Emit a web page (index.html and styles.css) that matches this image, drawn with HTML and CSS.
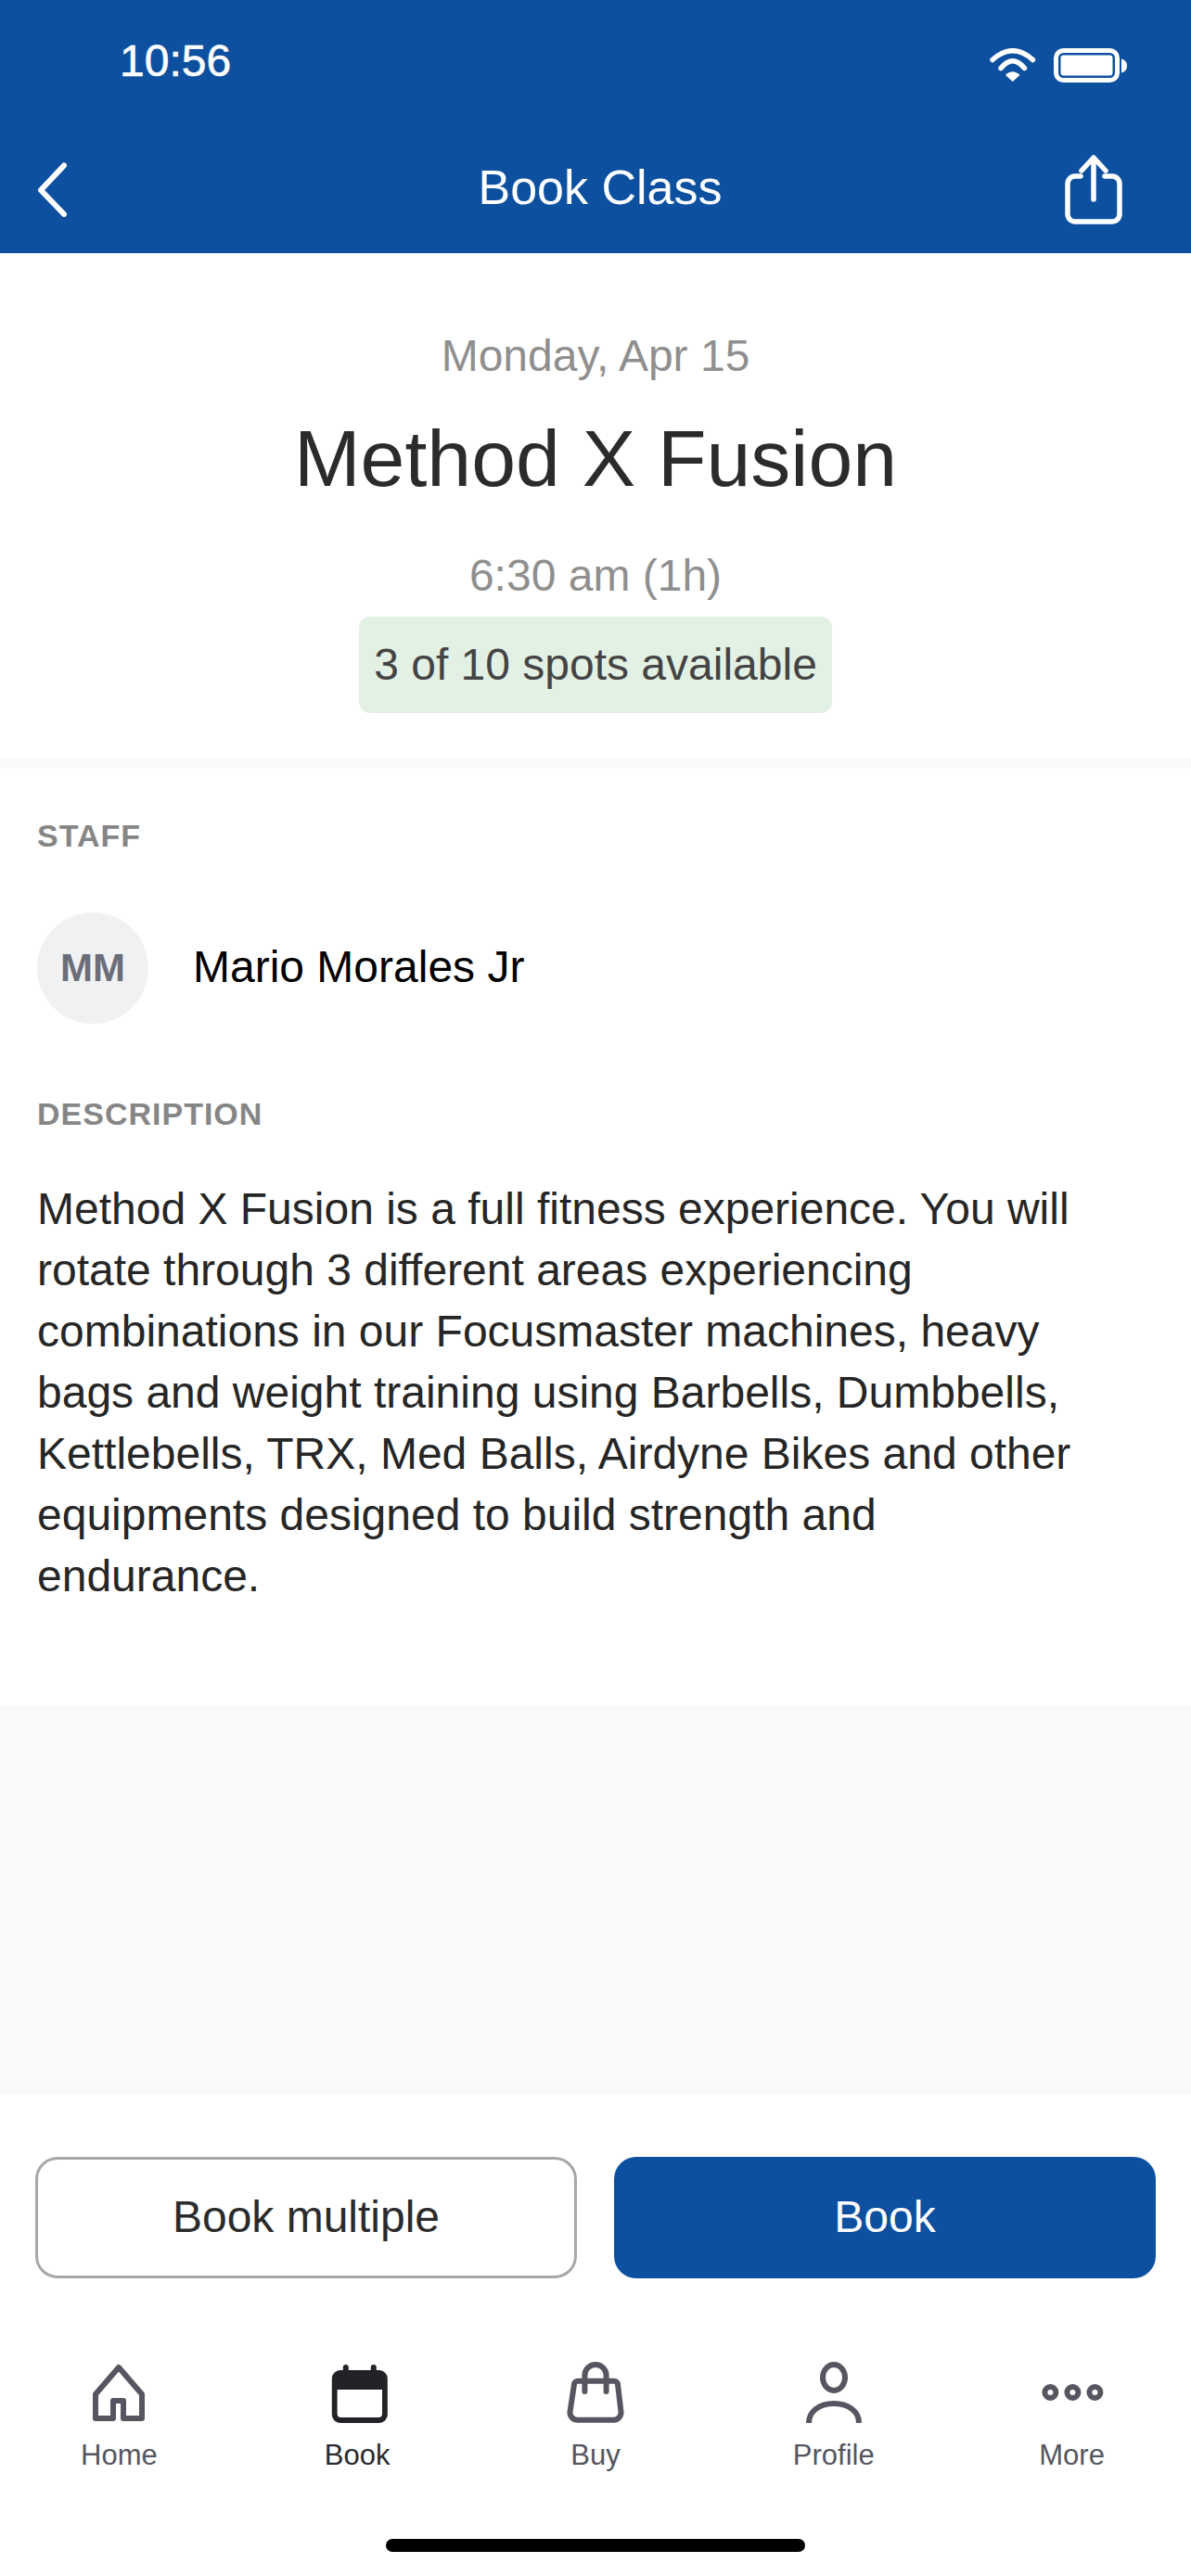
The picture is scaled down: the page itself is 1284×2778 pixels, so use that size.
FILE: index.html
```html
<!DOCTYPE html>
<html lang="en">
<head>
<meta charset="utf-8">
<title>Book Class</title>
<link rel="stylesheet" href="styles.css">
</head>
<body>
<div class="app">
  <header class="header">
    <div class="status">
      <span class="clock">10:56</span>
      <div class="status-icons">
        <svg class="wifi" viewBox="0 0 50 36" width="50" height="36"><path class="w-arc" d="M3 12.5Q24.7 -7 46.5 12.5"/><path class="w-arc" d="M12 21.5Q24.7 6 37.5 21.5"/><path class="w-fill" d="M17 29Q24.7 21.5 32.5 29L24.7 36Z"/></svg>
        <svg class="battery" viewBox="0 0 80 38" width="80" height="38"><rect class="b-out" x="2.5" y="2.5" width="66" height="32" rx="8"/><rect class="b-in" x="7.5" y="7.5" width="56" height="22" rx="3"/><path class="b-in" d="M73 11.5C77 12.5 79 15.5 79 19S77 25.5 73 26.5Z"/></svg>
      </div>
    </div>
    <nav class="nav">
      <svg class="back" viewBox="0 0 40 60" width="40" height="60"><path d="M32 5.5L7 32L32 58" transform="translate(0 -1)"/></svg>
      <h1 class="nav-title">Book Class</h1>
      <svg class="share" viewBox="0 0 66 76" width="66" height="76"><path d="M20 24H14a8 8 0 0 0-8 8V65a8 8 0 0 0 8 8H54a8 8 0 0 0 8-8V32a8 8 0 0 0-8-8H46"/><path d="M34 4V49M21 18L34 4L47 18"/></svg>
    </nav>
  </header>

  <section class="hero">
    <p class="date">Monday, Apr 15</p>
    <h2 class="title">Method X Fusion</h2>
    <p class="time">6:30 am (1h)</p>
    <span class="badge">3 of 10 spots available</span>
  </section>

  <section class="info">
    <h3 class="label">STAFF</h3>
    <div class="staff">
      <span class="avatar">MM</span>
      <span class="name">Mario Morales Jr</span>
    </div>
    <h3 class="label label-desc">DESCRIPTION</h3>
    <p class="desc">Method X Fusion is a full fitness experience. You will rotate through 3 different areas experiencing combinations in our Focusmaster machines, heavy bags and weight training using Barbells, Dumbbells, Kettlebells, TRX, Med Balls, Airdyne Bikes and other equipments designed to build strength and endurance.</p>
  </section>

  <div class="filler"></div>

  <footer class="footer">
    <div class="actions">
      <button class="btn btn-outline">Book multiple</button>
      <button class="btn btn-primary">Book</button>
    </div>
    <div class="tabs">
      <div class="tab">
        <svg class="ico" viewBox="0 0 72 72" width="72" height="72"><path d="M36 9L61 38V64H41V45H30V64H11V38Z"/></svg>
        <span>Home</span>
      </div>
      <div class="tab tab-active">
        <svg class="ico ico-solid" viewBox="0 0 72 72" width="72" height="72"><path class="tick" d="M23.8 9V14M53.8 9V14"/><rect class="cal" x="8.8" y="12" width="60" height="57" rx="9"/><path class="cal-in" d="M14.6 33H63V59a4 4 0 0 1-4 4H18.6a4 4 0 0 1-4-4Z"/></svg>
        <span>Book</span>
      </div>
      <div class="tab">
        <svg class="ico" viewBox="0 0 72 72" width="72" height="72"><path d="M17 23.7H56a4 4 0 0 1 4 3.6L63.5 57a8 8 0 0 1-8 8.7H16.5a8 8 0 0 1-8-8.7L13 27.3a4 4 0 0 1 4-3.6Z"/><path d="M24.4 35V17.5a11.6 11.6 0 0 1 23.2 0V35"/></svg>
        <span>Buy</span>
      </div>
      <div class="tab">
        <svg class="ico" viewBox="0 0 72 72" width="72" height="72"><ellipse cx="36" cy="20" rx="12" ry="14"/><path class="butt" d="M9 69C9 56 21 48 36 48S63 56 63 69"/></svg>
        <span>Profile</span>
      </div>
      <div class="tab">
        <svg class="ico" viewBox="0 0 72 72" width="72" height="72"><circle cx="12.4" cy="36" r="6"/><circle cx="36.4" cy="36" r="6"/><circle cx="60.4" cy="36" r="6"/></svg>
        <span>More</span>
      </div>
    </div>
    <div class="home-indicator"></div>
  </footer>
</div>
</body>
</html>
```

FILE: styles.css
```css
* { box-sizing: border-box; }
html, body { margin: 0; padding: 0; background: #fff; }
body { font-family: "Liberation Sans", Arial, sans-serif; }
.app { width: 1284px; height: 2778px; display: flex; flex-direction: column; overflow: hidden; }

.header { background: #0d50a0; color: #fff; height: 273px; flex: none; }
.status { height: 135px; padding: 38px 68px 0 129px; display: flex; justify-content: space-between; align-items: flex-start; }
.clock { font-size: 48px; line-height: 56px; -webkit-text-stroke: 0.6px #fff; }
.status-icons { display: flex; gap: 19px; margin-top: 14px; }
.wifi, .battery { display: block; }
.w-arc { fill: none; stroke: #fff; stroke-width: 5.5; stroke-linecap: round; }
.w-fill { fill: #fff; }
.b-out { fill: none; stroke: #fff; stroke-width: 5; }
.b-in { fill: #fff; }

.nav { height: 138px; padding: 0 73px 0 37px; display: flex; align-items: center; }
.back, .share { flex: none; fill: none; stroke: #fff; stroke-linecap: round; stroke-linejoin: round; }
.back { stroke-width: 6; }
.share { stroke-width: 5.5; }
.nav-title { flex: 1; margin: 0 0 4px; padding-left: 72px; text-align: center; font-size: 52px; font-weight: 400; line-height: 60px; }

.hero { flex: none; height: 544px; padding-top: 83px; display: flex; flex-direction: column; align-items: center; color: #8f8f8f; }
.date, .time { margin: 0; font-size: 48px; line-height: 56px; }
.title { margin: 32px 0 0; font-size: 86px; font-weight: 400; line-height: 100px; color: #2b2b2b; }
.time { margin-top: 49px; }
.badge { margin-top: 16px; height: 104px; width: 510px; border-radius: 12px; background: #e3f1e4; color: #444; font-size: 48px; line-height: 104px; text-align: center; }

.info { flex: none; height: 1023px; border-top: 12px solid #f8f9fb; padding: 52px 40px 0; background: #fff; }
.label { margin: 0; font-size: 34px; line-height: 40px; font-weight: 700; letter-spacing: 1px; color: #868686; }
.label-desc { margin-top: 77px; }
.staff { margin-top: 63px; display: flex; align-items: center; gap: 48px; }
.avatar { width: 120px; height: 120px; border-radius: 50%; background: #f0f1f3; color: #6b6e78; font-size: 42px; font-weight: 700; display: flex; align-items: center; justify-content: center; }
.name { font-size: 48px; color: #000; margin-bottom: 3px; }
.desc { margin: 50px 0 0; max-width: 1130px; font-size: 48px; line-height: 66px; color: #262626; }

.filler { flex: 1; background: #f8f9fb; }

.footer { flex: none; background: #fff; padding-top: 67px; }
.actions { display: grid; grid-template-columns: 1fr 1fr; gap: 40px; padding: 0 38px; }
.btn { height: 131px; border-radius: 24px; font: 48px "Liberation Sans", Arial, sans-serif; padding: 0 0 2px; }
.btn-outline { background: #fff; border: 3px solid #a8a8a8; color: #2b2b2b; }
.btn-primary { background: #0d50a0; border: 0; color: #fff; }

.tabs { display: grid; grid-template-columns: repeat(5, 1fr); margin-top: 87px; }
.tab { display: flex; flex-direction: column; align-items: center; font-size: 31px; line-height: 36px; color: #55565f; }
.tab-active { color: #2b2b2f; }
.tab span { margin-top: 14px; }
.ico { display: block; fill: none; stroke: #55565f; stroke-width: 6; stroke-linecap: round; stroke-linejoin: round; }
.butt { stroke-linecap: butt; }
.ico-solid { stroke: none; }
.tick { stroke: #222327; stroke-width: 6; }
.cal { fill: #222327; }
.cal-in { fill: #fff; }

.home-indicator { width: 452px; height: 14px; border-radius: 7px; background: #000; margin: 72px auto 26px; }
```
